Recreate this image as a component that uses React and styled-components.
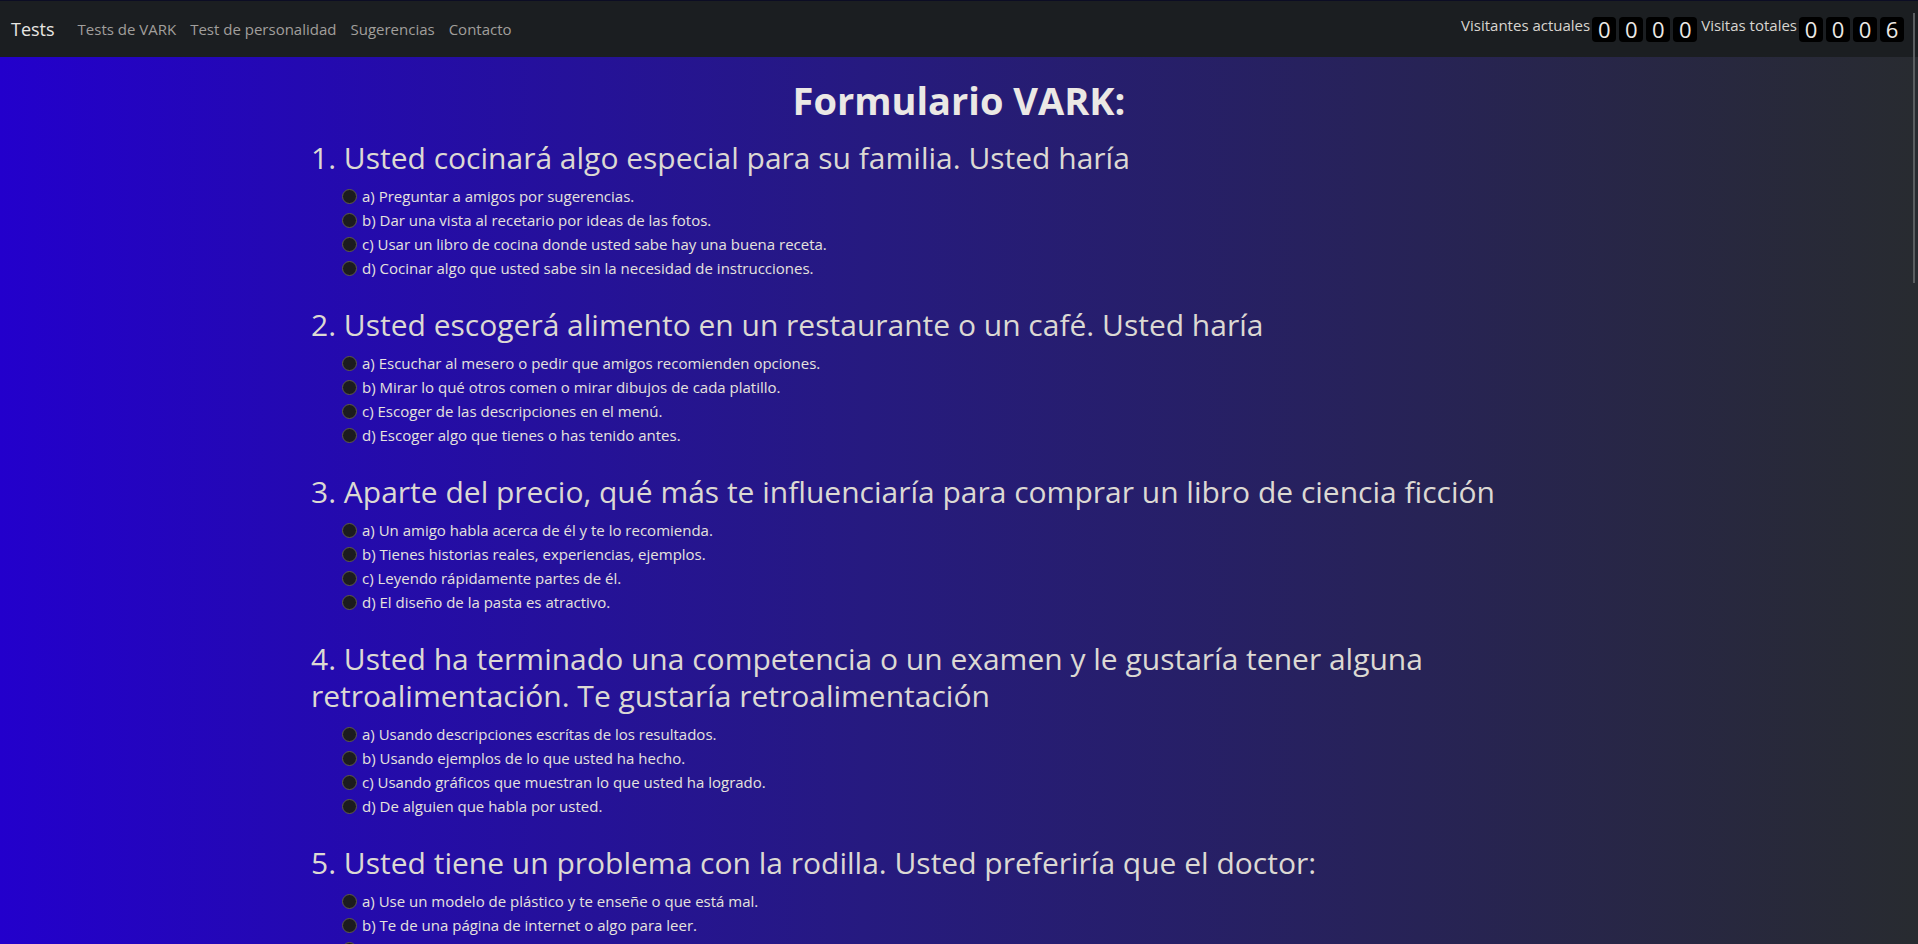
import React from "react"
import styled, { createGlobalStyle } from "styled-components"

const GlobalStyle = createGlobalStyle`
  *, *::before, *::after {
    box-sizing: border-box;
  }
  html, body {
    margin: 0;
    padding: 0;
  }
  body {
    font-family: "Open Sans", "Noto Sans", sans-serif;
    background: linear-gradient(to right, #2300cc 0%, #261a80 45%, #282b30 100%);
    background-attachment: fixed;
    min-height: 100vh;
    color: #e8e6e3;
    overflow: hidden;
  }
`

const Navbar = styled.nav`
  height: 57px;
  display: flex;
  align-items: center;
  padding: 0 14px 0 11px;
  background: #1b1e21;
  border-top: 1px solid #0c0d24;
`

const Brand = styled.a`
  font-size: 18px;
  color: #e8e6e3;
  margin-right: 16px;
  text-decoration: none;
`

const NavLink = styled.a`
  font-size: 15px;
  color: #a19f9c;
  padding: 0 7px;
  text-decoration: none;
`

const Counters = styled.div`
  margin-left: auto;
  display: flex;
  align-items: center;
  gap: 2px;
`

const CounterLabel = styled.span`
  font-size: 15px;
  color: #d8d5d0;
  margin-top: -8px;
  margin-left: ${({ $first }) => ($first ? "0" : "2px")};
`

const Digits = styled.div`
  display: flex;
  gap: 3px;
`

const Digit = styled.span`
  width: 24px;
  height: 25px;
  border-radius: 4px;
  background: #000;
  color: #ece9e5;
  font-size: 22px;
  line-height: 25px;
  text-align: center;
`

const Container = styled.main`
  max-width: 1320px;
  margin: 0 auto;
  padding: 0 12px;
`

const Title = styled.h1`
  font-size: 38px;
  font-weight: 700;
  line-height: 48px;
  text-align: center;
  color: #ebe8e5;
  margin: 19px 0 15px;
`

const Question = styled.section`
  margin-bottom: 26px;
`

const QuestionText = styled.h2`
  font-size: 30px;
  font-weight: 400;
  line-height: 37px;
  color: #dcd9d3;
  margin: 0 0 8px;
`

const Options = styled.ul`
  list-style: none;
  margin: 0;
  padding: 0 0 0 31px;
`

const Option = styled.li`
  display: flex;
  align-items: center;
  height: 24px;
  font-size: 15px;
  color: #e6e3de;
`

const Radio = styled.input.attrs({ type: "radio" })`
  appearance: none;
  flex-shrink: 0;
  width: 15px;
  height: 15px;
  margin: 0 5px 0 0;
  border-radius: 50%;
  border: 1px solid #5e5b48;
  background: #1c1c1e;
`

const ScrollThumb = styled.div`
  position: fixed;
  top: 13px;
  right: 3px;
  width: 2px;
  height: 270px;
  background: #5a5d60;
`

const questions = [
  {
    text: "Usted cocinará algo especial para su familia. Usted haría",
    options: [
      "a) Preguntar a amigos por sugerencias.",
      "b) Dar una vista al recetario por ideas de las fotos.",
      "c) Usar un libro de cocina donde usted sabe hay una buena receta.",
      "d) Cocinar algo que usted sabe sin la necesidad de instrucciones.",
    ],
  },
  {
    text: "Usted escogerá alimento en un restaurante o un café. Usted haría",
    options: [
      "a) Escuchar al mesero o pedir que amigos recomienden opciones.",
      "b) Mirar lo qué otros comen o mirar dibujos de cada platillo.",
      "c) Escoger de las descripciones en el menú.",
      "d) Escoger algo que tienes o has tenido antes.",
    ],
  },
  {
    text: "Aparte del precio, qué más te influenciaría para comprar un libro de ciencia ficción",
    options: [
      "a) Un amigo habla acerca de él y te lo recomienda.",
      "b) Tienes historias reales, experiencias, ejemplos.",
      "c) Leyendo rápidamente partes de él.",
      "d) El diseño de la pasta es atractivo.",
    ],
  },
  {
    text: "Usted ha terminado una competencia o un examen y le gustaría tener alguna retroalimentación. Te gustaría retroalimentación",
    options: [
      "a) Usando descripciones escrítas de los resultados.",
      "b) Usando ejemplos de lo que usted ha hecho.",
      "c) Usando gráficos que muestran lo que usted ha logrado.",
      "d) De alguien que habla por usted.",
    ],
  },
  {
    text: "Usted tiene un problema con la rodilla. Usted preferiría que el doctor:",
    options: [
      "a) Use un modelo de plástico y te enseñe o que está mal.",
      "b) Te de una página de internet o algo para leer.",
      "c) Te describa lo que está mal.",
      "d) Te muestre con un diagrama lo que está mal.",
    ],
  },
]

const Counter = ({ label, value, first }) => (
  <>
    <CounterLabel $first={first}>{label}</CounterLabel>
    <Digits>
      {value.split("").map((d, i) => (
        <Digit key={i}>{d}</Digit>
      ))}
    </Digits>
  </>
)

const App = () => {
  return (
    <>
      <GlobalStyle />
      <Navbar>
        <Brand href="#">Tests</Brand>
        <NavLink href="#">Tests de VARK</NavLink>
        <NavLink href="#">Test de personalidad</NavLink>
        <NavLink href="#">Sugerencias</NavLink>
        <NavLink href="#">Contacto</NavLink>
        <Counters>
          <Counter label="Visitantes actuales" value="0000" first />
          <Counter label="Visitas totales" value="0006" />
        </Counters>
      </Navbar>
      <Container>
        <Title>Formulario VARK:</Title>
        {questions.map((q, qi) => (
          <Question key={qi}>
            <QuestionText>
              {qi + 1}. {q.text}
            </QuestionText>
            <Options>
              {q.options.map((opt, oi) => (
                <Option key={oi}>
                  <Radio name={`q${qi}`} />
                  {opt}
                </Option>
              ))}
            </Options>
          </Question>
        ))}
      </Container>
      <ScrollThumb />
    </>
  )
}

export default App
